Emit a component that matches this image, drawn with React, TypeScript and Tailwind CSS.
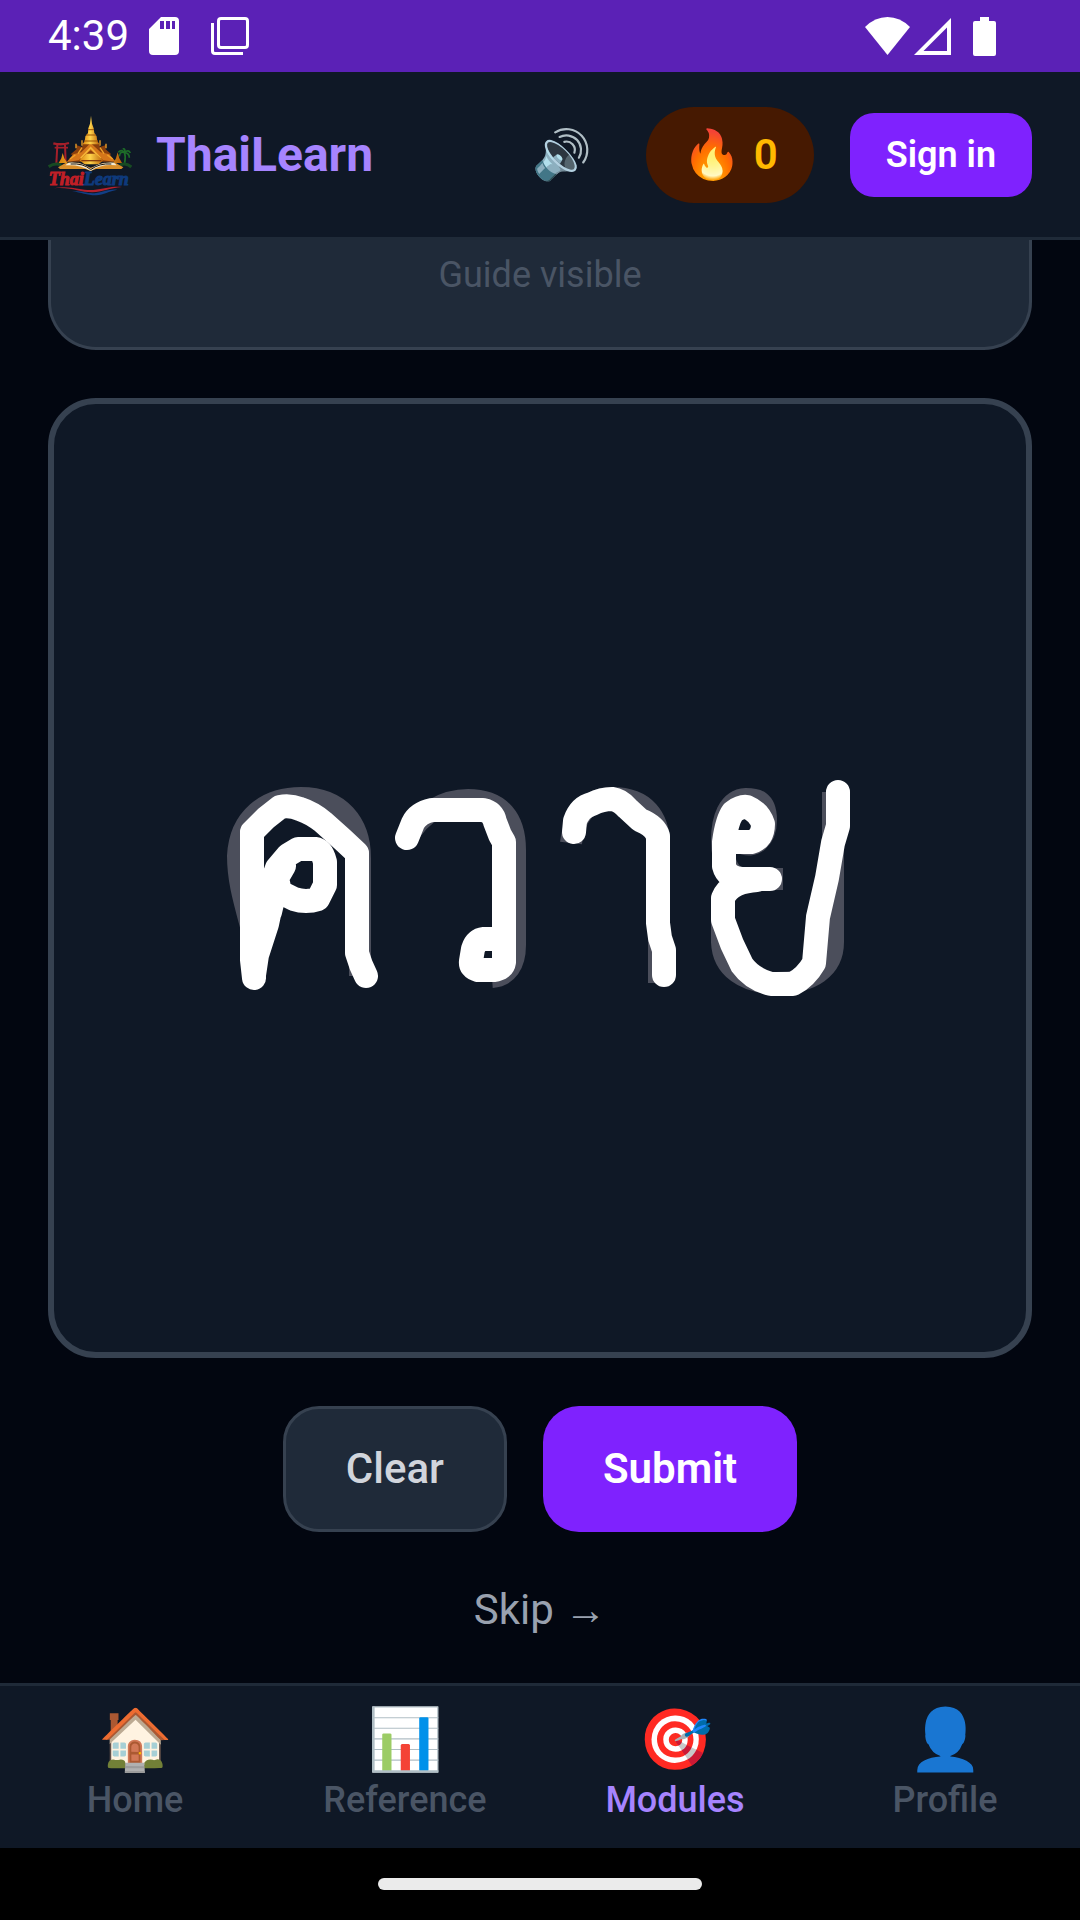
const tabs = [
  { icon: '🏠', label: 'Home' },
  { icon: '📊', label: 'Reference' },
  { icon: '🎯', label: 'Modules', active: true },
  { icon: '👤', label: 'Profile' },
]

// what the learner has drawn so far, one path per stroke
const strokes = [
  'M254 978L252 960V832L266 818L280 807Q290 805 300 809Q312 813 323 822L342 839L357 853V953L361 965L366 976',
  'M254 975L257 955L267 924L271 905V885L277 868L288 855L298 849H315Q322 850 325 862V885L318 899Q306 903 294 899L280 892L277 878L284 866M262 880V925M268 880L274 895L270 912',
  'M407 838L413 823Q418 813 432 810H483Q493 812 495 822L500 835L504 842V962Q503 969 494 970H478Q470 968 471 961L473 949Q476 940 484 939H502',
  'M574 832L575 821Q580 807 592 804Q602 799 612 799Q620 800 627 808L640 820Q655 826 658 836V923L660 938L664 950V975',
  'M770 879H742Q727 878 724 866V842Q727 820 733 812Q741 806 747 807Q759 812 763 824Q763 839 751 842H738M757 880C742 881 728 886 723 898V920L732 944L742 965Q752 979 771 984H793Q806 977 814 963L818 917L827 878L833 843L838 826V792',
]

const guide = [
  'M252 970V930C244 900 238 880 238 856C240 818 266 798 301 798C340 798 360 824 360 858V976',
  'M407 838C420 812 446 800 468 800C501 800 515 820 515 850V945C515 964 507 976 492 977',
  'M571 843C575 811 592 798 612 798C645 798 659 818 659 845V983',
  'M740 842C754 850 766 838 766 820C766 800 756 799 746 799C728 800 722 820 722 840C722 862 730 879 745 879H783',
  'M740 881C728 888 722 895 722 915V942C723 968 745 983 776 983C812 983 833 968 833 942V792',
]

function Logo() {
  return (
    <svg viewBox="6 0 252 252" className="size-[84px] shrink-0" role="img" aria-label="ThaiLearn logo">
      <defs>
        <linearGradient id="gold" x1="0" x2="1">
          <stop offset="0" stopColor="#d9820c" />
          <stop offset=".45" stopColor="#ffd34a" />
          <stop offset="1" stopColor="#b85f08" />
        </linearGradient>
      </defs>
      {/* gate */}
      <g stroke="#a51f2a" fill="none">
        <path d="M22 91Q46 97 69 90" strokeWidth="7" />
        <path d="M26 104H66" strokeWidth="5" />
        <path d="M34 96L31 152M57 96L59 148" strokeWidth="6" />
      </g>
      {/* palms and grass */}
      <g stroke="#1d6b28" fill="none" strokeWidth="5">
        <path d="M236 150Q240 132 235 118M235 118Q226 108 217 118M235 118Q222 114 220 130M235 118Q248 108 253 120M235 118Q250 120 250 134M235 118Q240 106 230 108" />
        <path d="M8 161Q26 148 46 156M222 156Q240 148 256 162" stroke="#174a22" strokeWidth="9" />
      </g>
      {/* temple */}
      <path d="M70 146L80 126L74 124L92 108L90 96L108 102L116 80H154L162 102L180 96L178 108L196 124L190 126L202 146Z" fill="#8a3f0c" />
      <path d="M62 147L82 124L106 118L134 90L164 118L190 124L210 147L172 142L134 112L98 142Z" fill="#d5761a" />
      <path d="M96 122L108 104M174 122L162 104M108 98V82M162 98V82M90 106V92M180 106V92M72 138L88 126M200 138L184 126" stroke="#f0a128" strokeWidth="4" />
      <path d="M104 136L134 104L164 136" fill="none" stroke="#f4b436" strokeWidth="5" />
      <path d="M135 8L138 32L143 46L145 60L152 70L154 86L161 94H109L116 86L118 70L126 60L127 46L132 32Z" fill="url(#gold)" />
      <path d="M126 50H144M120 66H150M116 84H154" stroke="#9a5306" strokeWidth="3" />
      <path d="M100 142L122 122H148L172 142L158 154H116Z" fill="url(#gold)" />
      <path d="M106 143H166" stroke="#8a3f0c" strokeWidth="4" />
      <path d="M38 150L46 136L50 120L55 136L64 150ZM202 150L210 136L215 118L220 136L228 150Z" fill="url(#gold)" />
      {/* open book */}
      <path d="M36 163L60 149H98L134 164L174 149H208L232 163L226 168H150L134 174L118 168H42Z" fill="#d98e2a" />
      <path d="M58 157L68 149Q108 146 134 168Q162 146 204 149L212 157Q166 152 134 174Q104 154 58 157Z" fill="#f4ead2" />
      <path d="M74 153Q112 150 134 170Q160 150 196 153" fill="none" stroke="#20180f" strokeWidth="3" />
      <text
        x="8"
        y="217"
        fontSize="54"
        fontWeight="900"
        fontStyle="italic"
        fontFamily="Liberation Serif, serif"
        strokeWidth="3"
      >
        <tspan fill="#c01f26" stroke="#c01f26">Thai</tspan>
        <tspan fill="#0e3a7c" stroke="#0e3a7c">Learn</tspan>
      </text>
      <path d="M24 226C74 215 106 234 142 231C176 227 198 219 228 222C190 226 168 236 140 238C104 239 76 221 24 226Z" fill="#b3202c" />
      <path d="M78 235C110 233 124 243 150 240C174 236 192 227 214 230C188 235 174 245 150 247C120 247 108 239 78 235Z" fill="#123f86" />
    </svg>
  )
}

function StatusBar() {
  return (
    <div className="flex h-[72px] shrink-0 items-center justify-between bg-[#5b21b6] pr-[84px] pl-12 text-white">
      <div className="flex items-center">
        <span className="text-[42px] leading-[60px]">4:39</span>
        <svg viewBox="0 0 30 38" className="ml-5 h-[38px] w-[30px]" fill="currentColor">
          <path
            fillRule="evenodd"
            d="M12 0H26Q30 0 30 4V34Q30 38 26 38H4Q0 38 0 34V12ZM11 4V12H15V4ZM17 4V12H21V4ZM23 4V12H26V4Z"
          />
        </svg>
        <svg viewBox="0 0 38 38" className="ml-8 size-[38px]" fill="none" stroke="currentColor" strokeWidth="3">
          <rect x="7.5" y="1.5" width="29" height="29" rx="2.5" />
          <path d="M1.5 6V34Q1.5 36.5 4 36.5H32" />
        </svg>
      </div>
      <div className="flex items-center">
        <svg viewBox="0 0 45 38" className="h-[38px] w-[45px]" fill="currentColor">
          <path d="M22.500 38L0 10Q10 0 22.500 0T45 10Z" />
        </svg>
        <svg viewBox="0 0 37 38" className="ml-1 h-[38px] w-[37px]" fill="currentColor">
          <path fillRule="evenodd" d="M37 1V38H0ZM33 10.500L9.500 34H33Z" />
        </svg>
        <svg viewBox="0 0 23 39" className="ml-[22px] h-[39px] w-[23px]" fill="currentColor">
          <path d="M7 0H16V4H21Q23 4 23 6V37Q23 39 21 39H2Q0 39 0 37V6Q0 4 2 4H7Z" />
        </svg>
      </div>
    </div>
  )
}

function Header() {
  return (
    <header className="flex h-[168px] shrink-0 items-center justify-between border-b-[3px] border-[#1f2a38] bg-[#0f1826] px-12">
      <a href="#home" className="flex items-center gap-6">
        <Logo />
        <span className="text-[48px] leading-[60px] font-bold text-violet-400">ThaiLearn</span>
      </a>
      <div className="flex items-center gap-9">
        <button type="button" aria-label="Toggle sound" className="px-[18px] text-[48px] leading-[72px]">
          🔊
        </button>
        <div className="flex h-24 items-center gap-3 rounded-full bg-[#461901] px-9">
          <span className="text-[48px] leading-[72px]">🔥</span>
          <span className="text-[42px] leading-[60px] font-semibold text-amber-400">0</span>
        </div>
        <button
          type="button"
          className="rounded-3xl bg-violet-600 px-9 py-[18px] text-[36px] leading-[48px] font-semibold text-white"
        >
          Sign in
        </button>
      </div>
    </header>
  )
}

function DrawingCanvas() {
  return (
    <div className="mt-12 aspect-[41/40] overflow-hidden rounded-[48px] border-[6px] border-[#364150] bg-[#0f1826]">
      <svg
        viewBox="54 404 972 948"
        className="size-full"
        fill="none"
        strokeLinejoin="round"
        role="img"
        aria-label="Handwriting canvas"
      >
        <g stroke="#4b4e5b" strokeWidth="22">
          {guide.map((d) => (
            <path key={d} d={d} />
          ))}
        </g>
        <g stroke="#ffffff" strokeWidth="24" strokeLinecap="round">
          {strokes.map((d) => (
            <path key={d} d={d} />
          ))}
        </g>
      </svg>
    </div>
  )
}

function BottomNav() {
  return (
    <nav className="grid shrink-0 grid-cols-4 border-t-[3px] border-[#1f2a38] bg-[#0f1826] pt-[18px] pb-6">
      {tabs.map((t) => (
        <a
          key={t.label}
          href={`#${t.label.toLowerCase()}`}
          className={`flex flex-col items-center ${t.active ? 'text-violet-400' : 'text-gray-600'}`}
        >
          <span className="text-[60px] leading-[72px]">{t.icon}</span>
          <span className="text-[36px] leading-[48px] font-medium">{t.label}</span>
        </a>
      ))}
    </nav>
  )
}

export default function App() {
  return (
    <div className="flex min-h-screen flex-col bg-[#020610] font-['Roboto','Noto_Sans',sans-serif]">
      <StatusBar />
      <Header />
      <main className="flex-1 px-12">
        <div className="rounded-b-[48px] border-x-[3px] border-b-[3px] border-[#364150] bg-[#1f2a39] pt-[11px] pb-12 text-center">
          <p className="text-[36px] leading-[48px] text-gray-600">Guide visible</p>
        </div>

        <DrawingCanvas />

        <div className="mt-12 flex justify-center gap-9">
          <button
            type="button"
            className="rounded-[36px] border-[3px] border-[#364150] bg-[#1f2a39] px-[60px] py-[30px] text-[42px] leading-[60px] font-medium text-gray-300"
          >
            Clear
          </button>
          <button
            type="button"
            className="rounded-[36px] bg-violet-600 px-[60px] py-[33px] text-[42px] leading-[60px] font-semibold text-white"
          >
            Submit
          </button>
        </div>

        <div className="mt-12 flex justify-center">
          <button type="button" className="text-[42px] leading-[60px] text-gray-400">
            Skip →
          </button>
        </div>
      </main>
      <BottomNav />
      <div className="flex h-[72px] shrink-0 items-center justify-center bg-black">
        <div className="h-3 w-[30%] rounded-full bg-[#ebebeb]" />
      </div>
    </div>
  )
}
